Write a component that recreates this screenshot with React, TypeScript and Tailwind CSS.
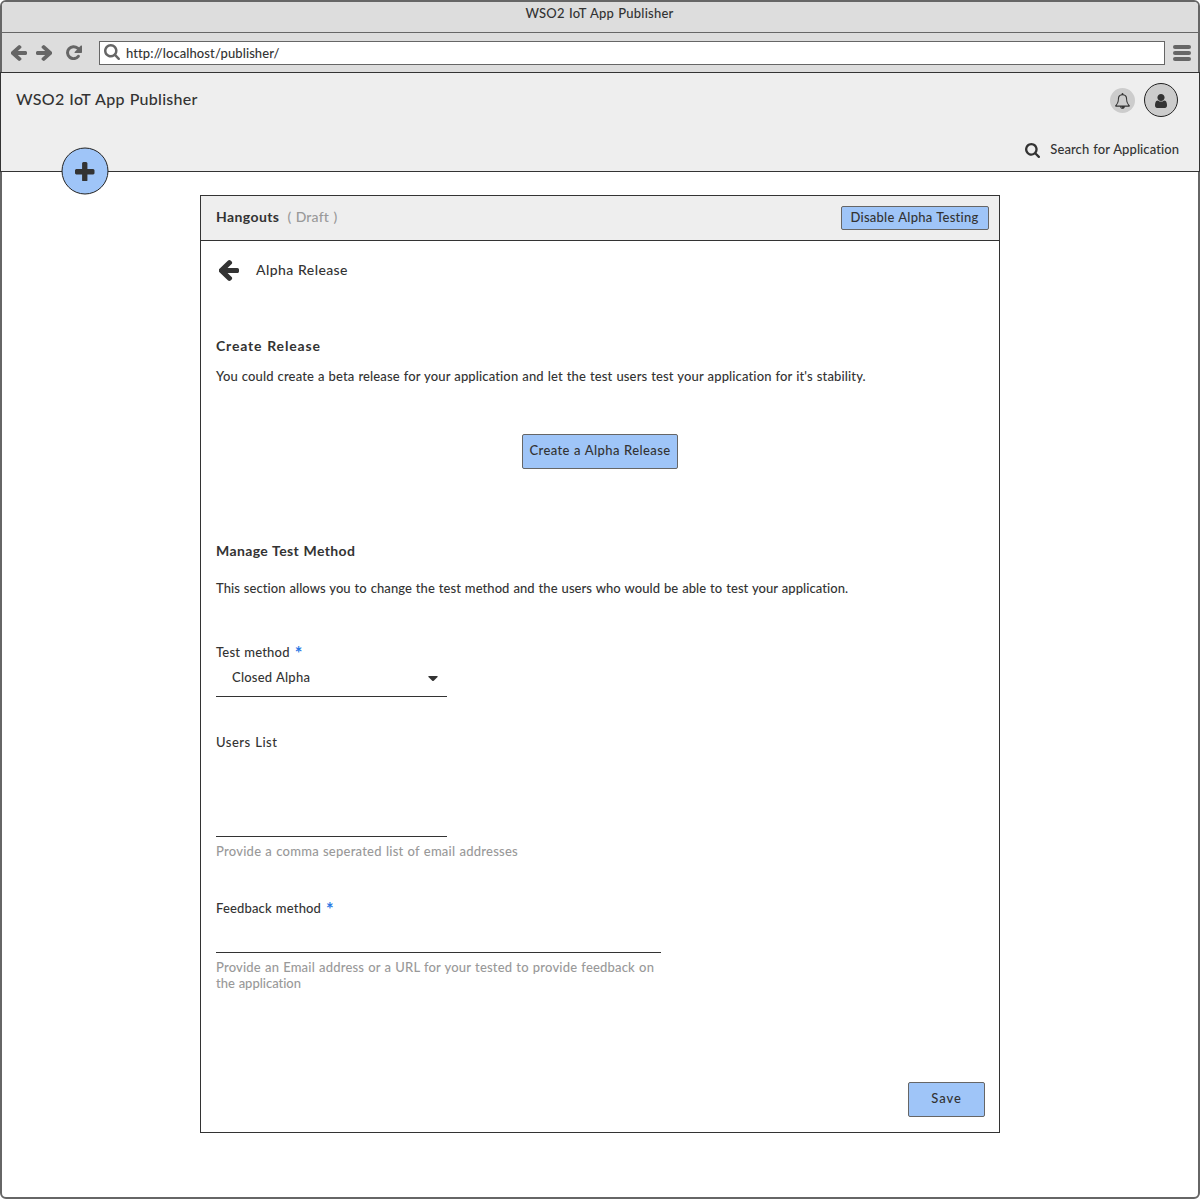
import type { ReactNode } from "react";

type GlyphProps = { className: string };

function ArrowLeft({ className }: GlyphProps) {
  return (
    <svg className={className} viewBox="102 180 1434 1560" preserveAspectRatio="none" fill="currentColor">
      <path d="M1536 896v128q0 53-32.5 90.5t-84.5 37.5h-704l293 294q38 36 38 90t-38 90l-75 76q-37 37-90 37-52 0-91-37l-651-652q-37-37-37-90 0-52 37-91l651-650q38-38 91-38 52 0 90 38l75 74q38 38 38 91t-38 91l-293 293h704q52 0 84.5 37.5t32.5 90.5z" />
    </svg>
  );
}

function Reload({ className }: GlyphProps) {
  return (
    <svg className={className} viewBox="0 0 16 15" fill="none">
      <path d="M12.300 11.300A6 6 0 1 1 11.600 3.200" stroke="currentColor" strokeWidth="3" strokeLinecap="round" />
      <path d="M16 1v6.300q0 .7-.7.700H9q-1 0-.3-.9L14.900.6q1.100-.6 1.100.4z" fill="currentColor" />
    </svg>
  );
}

function Magnifier({ className }: GlyphProps) {
  return (
    <svg className={className} viewBox="64 128 1664 1664" fill="currentColor">
      <path d="M1216 832q0-185-131.5-316.5t-316.5-131.5-316.5 131.5-131.5 316.5 131.5 316.5 316.5 131.5 316.5-131.5 131.5-316.5zm512 832q0 52-38 90t-90 38q-54 0-90-38l-343-342q-179 124-399 124-143 0-273.5-55.5t-225-150-150-225-55.5-273.5 55.5-273.5 150-225 225-150 273.5-55.5 273.5 55.5 225 150 150 225 55.5 273.5q0 220-124 399l343 343q37 37 37 90z" />
    </svg>
  );
}

function Plus({ className }: GlyphProps) {
  return (
    <svg className={className} viewBox="192 128 1408 1408" fill="currentColor">
      <path d="M1600 736v192q0 40-28 68t-68 28h-416v416q0 40-28 68t-68 28h-192q-40 0-68-28t-28-68v-416h-416q-40 0-68-28t-28-68v-192q0-40 28-68t68-28h416v-416q0-40 28-68t68-28h192q40 0 68 28t28 68v416h416q40 0 68 28t28 68z" />
    </svg>
  );
}

function Bell({ className }: GlyphProps) {
  return (
    <svg className={className} viewBox="64 0 1664 1792" fill="currentColor">
      <path d="M912 1696q0-16-16-16-59 0-101.5-42.5t-42.5-101.5q0-16-16-16t-16 16q0 73 51.5 124.5t124.5 51.5q16 0 16-16zm-666-288h1300q-266-300-266-832 0-51-24-105t-69-103-121.5-80.5-169.5-31.5-169.5 31.5-121.5 80.5-69 103-24 105q0 532-266 832zm1482 0q0 52-38 90t-90 38h-448q0 106-75 181t-181 75-181-75-75-181h-448q-52 0-90-38t-38-90q50-42 91-88t85-119.5 74.5-158.5 50-206 19.5-260q0-152 117-282.5t307-158.5q-8-19-8-39 0-40 28-68t68-28 68 28 28 68q0 20-8 39 190 28 307 158.5t117 282.5q0 139 19.5 260t50 206 74.5 158.5 85 119.5 91 88z" />
    </svg>
  );
}

function User({ className }: GlyphProps) {
  return (
    <svg className={className} viewBox="256 128 1280 1536" preserveAspectRatio="none" fill="currentColor">
      <path d="M1536 1399q0 109-62.5 187t-150.5 78h-854q-88 0-150.5-78t-62.5-187q0-85 8.5-160.5t31.5-152 58.5-131 94-89 134.5-34.5q131 128 313 128t313-128q76 0 134.5 34.5t94 89 58.5 131 31.5 152 8.5 160.5zm-256-887q0 159-112.5 271.5t-271.5 112.5-271.5-112.5-112.5-271.5 112.5-271.5 271.5-112.5 271.5 112.5 112.5 271.5z" />
    </svg>
  );
}

function Button({ className, children }: { className: string; children: ReactNode }) {
  return (
    <button className={`flex items-center justify-center rounded-[2px] border border-[#666] bg-[#9fc5f8] pb-[3px] [word-spacing:0.58px] ${className}`}>
      {children}
    </button>
  );
}

function Browser({ children }: { children: ReactNode }) {
  return (
    <div className="h-[1199px] w-[1200px] rounded-[6px] border-2 border-[#666] bg-white">
      <div className="flex h-[31px] items-start justify-center rounded-t-[4px] border-b border-[#666] bg-[#ddd] pr-px pt-[3px] tracking-[0.24px]">
        WSO2 IoT App Publisher
      </div>
      <div className="flex h-[39px] items-center bg-[#ddd] pl-[9px] pr-[7px] text-[#666]">
        <ArrowLeft className="h-4 w-4" />
        <ArrowLeft className="ml-[9px] h-4 w-4 rotate-180" />
        <Reload className="ml-[14px] h-[15px] w-4" />
        <div className="ml-[17px] flex h-6 w-[1066px] items-center border border-[#666] bg-white pl-1">
          <Magnifier className="mb-px h-4 w-4" />
          <span className="ml-[6px] tracking-[0.09px] text-[#333]">http://localhost/publisher/</span>
        </div>
        <div className="ml-2 flex w-[18px] flex-col gap-[2px]">
          <div className="h-1 rounded-full bg-[#666]" />
          <div className="h-1 rounded-full bg-[#666]" />
          <div className="h-1 rounded-full bg-[#666]" />
        </div>
      </div>
      {children}
    </div>
  );
}

function Header() {
  return (
    <header className="relative -mx-[2px] flex h-[100px] justify-between border border-[#333] bg-[#eee]">
      <h1 className="ml-[15px] mt-[16px] text-base leading-5 tracking-[0.28px]">WSO2 IoT App Publisher</h1>
      <div className="mr-5 mt-[10px] flex flex-col items-end">
        <div className="mr-px flex items-center gap-[9px]">
          <div className="flex h-[25px] w-[25px] items-center justify-center rounded-full bg-[#ccc]">
            <Bell className="mt-px h-4 w-[15px]" />
          </div>
          <div className="flex h-[34px] w-[34px] items-center justify-center rounded-full border border-[#222] bg-[#ccc]">
            <User className="mt-px h-[14px] w-3" />
          </div>
        </div>
        <div className="mt-[24px] flex items-start">
          <Magnifier className="mt-[2px] h-[15px] w-[15px]" />
          <span className="ml-[10px] tracking-[0.08px]">Search for Application</span>
        </div>
      </div>
      <button className="absolute left-[60px] top-[74px] flex h-[48px] w-[48px] items-center justify-center">
        <svg className="absolute inset-0 h-12 w-12" viewBox="0 0 48 48">
          <circle cx="24" cy="24" r="23" fill="#9fc5f8" stroke="#222" />
        </svg>
        <Plus className="relative mt-px h-[19.5px] w-[19.5px]" />
      </button>
    </header>
  );
}

function Star() {
  return <span className="ml-[5px] inline-block h-4 align-top text-lg font-bold leading-[18px] text-[#2b78e4]">*</span>;
}

export default function App() {
  return (
    <div className="whitespace-nowrap bg-white font-['Lato',sans-serif] text-[13px] font-medium leading-4 text-[#333] [word-spacing:0.58px]">
      <Browser>
        <Header />
        <main className="ml-[198px] mt-[23px] h-[938px] w-[800px] border border-[#333]">
          <div className="flex h-[45px] items-center justify-between border-b border-[#333] bg-[#eee] pl-[15px] pr-[10px]">
            <div className="flex pb-[2px] text-sm leading-4">
              <span className="font-bold tracking-[0.4px]">Hangouts</span>
              <span className="ml-2 tracking-[0.2px] text-[#999]">( Draft )</span>
            </div>
            <Button className="h-6 w-[148px] pr-px tracking-[0.24px]">Disable Alpha Testing</Button>
          </div>
          <div className="flex flex-col pl-[15px]">
            <div className="mt-[19px] flex h-[21px] items-center">
              <ArrowLeft className="ml-[2.5px] h-[21px] w-[20px]" />
              <span className="ml-[17.5px] pb-[2px] text-sm leading-4 tracking-[0.4px]">Alpha Release</span>
            </div>
            <h2 className="mt-[57px] text-sm font-bold leading-4 tracking-[0.84px]">Create Release</h2>
            <p className="mt-[14px] tracking-[0.13px]">
              You could create a beta release for your application and let the test users test your application for it's stability.
            </p>
            <Button className="ml-[306px] mt-[50px] h-[35px] w-[156px] tracking-[0.4px]">Create a Alpha Release</Button>
            <h2 className="mt-[74px] text-sm font-bold leading-4 tracking-[0.38px]">Manage Test Method</h2>
            <p className="mt-[21px] tracking-[0.06px]">
              This section allows you to change the test method and the users who would be able to test your application.
            </p>
            <label className="mt-[48px] h-4 tracking-[0.2px]">Test method<Star /></label>
            <div className="mt-[9px] flex h-7 w-[231px] justify-between border-b border-[#333] pl-4 pr-[9px]">
              <span className="tracking-[0.22px]">Closed Alpha</span>
              <svg className="mt-[7px] h-[5px] w-[10px]" viewBox="0 0 11 5" preserveAspectRatio="none" fill="currentColor">
                <path d="M1 0h9q1 .3.5 1L6.300 4.700q-.8.6-1.600 0L.5 1Q0 .3 1 0z" />
              </svg>
            </div>
            <label className="mt-[37px] tracking-[0.52px]">Users List</label>
            <div className="h-[87px] w-[231px] border-b border-[#333]" />
            <p className="mt-[6px] tracking-[0.24px] text-[#999]">Provide a comma seperated list of email addresses</p>
            <label className="mt-[41px] h-4 tracking-[0.16px]">Feedback method<Star /></label>
            <div className="h-[37px] w-[445px] border-b border-[#333]" />
            <p className="mt-[6px] tracking-[0.19px] text-[#999]">
              Provide an Email address or a URL for your tested to provide feedback on
              <br />
              <span className="tracking-[-0.02px]">the application</span>
            </p>
            <Button className="ml-[692px] mt-[91px] h-[35px] w-[77px] tracking-[0.9px]">Save</Button>
          </div>
        </main>
      </Browser>
    </div>
  );
}
